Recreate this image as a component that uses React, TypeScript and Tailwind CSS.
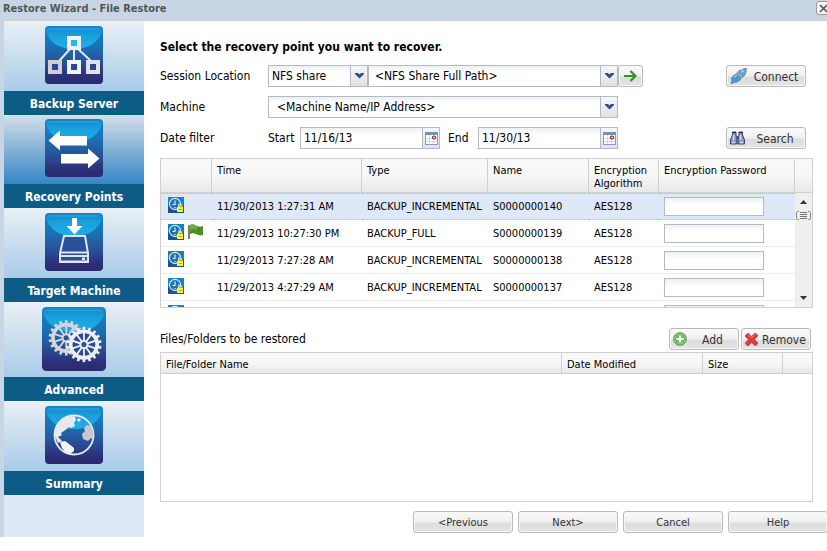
import { useId, type ReactNode } from "react";

const points = [
  { time: "11/30/2013 1:27:31 AM", type: "BACKUP_INCREMENTAL", name: "S0000000140", full: false },
  { time: "11/29/2013 10:27:30 PM", type: "BACKUP_FULL", name: "S0000000139", full: true },
  { time: "11/29/2013 7:27:28 AM", type: "BACKUP_INCREMENTAL", name: "S0000000138", full: false },
  { time: "11/29/2013 4:27:29 AM", type: "BACKUP_INCREMENTAL", name: "S0000000137", full: false },
  { time: "", type: "", name: "", full: false },
];

function Tile({ size = 58, children }: { size?: number; children: ReactNode }) {
  const id = useId();
  return (
    <svg width={size} height={size} viewBox="0 0 58 58" aria-hidden="true">
      <defs>
        <linearGradient id={id + "b"} x1="0" y1="0" x2="0" y2="1">
          <stop offset="0" stopColor="#1683c6" />
          <stop offset="0.35" stopColor="#1b70b5" />
          <stop offset="0.6" stopColor="#27549a" />
          <stop offset="0.88" stopColor="#2c2e78" />
          <stop offset="1" stopColor="#2a2a70" />
        </linearGradient>
        <linearGradient id={id + "g"} x1="0" y1="0" x2="0" y2="1">
          <stop offset="0" stopColor="#1585cb" />
          <stop offset="0.4" stopColor="#18a2dc" />
          <stop offset="1" stopColor="#22aeea" />
        </linearGradient>
        <clipPath id={id + "c"}>
          <rect width="58" height="58" rx="4" />
        </clipPath>
      </defs>
      <g clipPath={`url(#${id}c)`}>
        <rect width="58" height="58" fill={`url(#${id}b)`} />
        <path d="M1 5Q1 1 5 1H53Q57 1 57 5C54 16 44 23 29 23S4 16 1 5Z" fill={`url(#${id}g)`} />
        <path d="M4 3H54" stroke="#36bdea" strokeWidth="1" opacity=".7" />
      </g>
      {children}
    </svg>
  );
}

const ServerIcon = () => (
  <Tile>
    <path d="M26 22L14 35M29 22V35M32 22L46 35" stroke="#e4e6ec" strokeWidth="2" />
    <rect x="24" y="12" width="10" height="10" fill="#27b4ef" stroke="#f2f2f2" strokeWidth="4" />
    <rect x="5" y="36" width="10" height="10" fill="#294a91" stroke="#d0d0d2" strokeWidth="4" />
    <rect x="24" y="36" width="10" height="10" fill="#294a91" stroke="#f2f2f2" strokeWidth="4" />
    <rect x="43" y="36" width="10" height="10" fill="#294a91" stroke="#e2e2e4" strokeWidth="4" />
  </Tile>
);

const ArrowsIcon = () => (
  <Tile>
    <path d="M3.500 21.500L15 11.500V17H42V26.500H15V31.500Z" fill="#fff" />
    <path d="M54.500 39.500L43 29.500V35H16V44.500H43V49.500Z" fill="#fff" />
  </Tile>
);

const DriveIcon = () => (
  <Tile>
    <path d="M27 5H32V13H37.500L29.500 21.500L21.500 13H27Z" fill="#fff" />
    <path d="M19 23H40L43 40V49H15V40Z" fill="#29519a" stroke="#e4e4e8" strokeWidth="2" />
    <path d="M15.500 39.500H42.500M15 43H43" stroke="#e4e4e8" strokeWidth="2" />
    <path d="M15 48.500H43" stroke="#e4e4e8" strokeWidth="2" />
    <rect x="37" y="44.500" width="3" height="2.500" fill="#e4e4e8" />
  </Tile>
);

function Gear({ cx, cy, color }: { cx: number; cy: number; color: string }) {
  return (
    <g transform={`translate(${cx} ${cy})`}>
      {Array.from({ length: 18 }, (_, i) => (
        <rect key={i} x="-1.200" y="-16" width="2.400" height="4" fill={color} transform={`rotate(${i * 20})`} />
      ))}
      <circle r="12" fill="none" stroke={color} strokeWidth="3.400" />
      {Array.from({ length: 10 }, (_, i) => (
        <path key={i} d="M0 -3V-11" stroke={color} strokeWidth="1.700" transform={`rotate(${i * 36})`} />
      ))}
      <circle r="3.300" fill="#2a5299" stroke={color} strokeWidth="1.800" />
    </g>
  );
}

const GearsIcon = () => (
  <Tile size={64}>
    <Gear cx={22} cy={28} color="#d6d6da" />
    <circle cx="38" cy="34" r="14" fill="#284b93" />
    <Gear cx={38} cy={34} color="#eeeeee" />
  </Tile>
);

const GlobeIcon = () => (
  <Tile>
    <circle cx="29" cy="29" r="19.500" fill="none" stroke="#e8eaee" strokeWidth="1.800" />
    <path d="M9.500 29C10 20 16 12 24 10L30 10.500L31 14L29 17L30 20L26 22L24 21L19 25L16 27L17 29L13 31L17 35L13 37Z" fill="#e9e9eb" />
    <path d="M33 12L36 13.500L34.500 16L32 14.500Z" fill="#e9e9eb" />
    <path d="M15 36L20 35L24 38L29 42L29 45L25 48L20 46L17 42Z" fill="#f4f4f4" />
    <path d="M37 28L40 25L39 22L42 19L46 20L48.500 27L48 34L46 32L43 35L38 33Z" fill="#c8c8cc" />
  </Tile>
);

function ClockLockIcon() {
  return (
    <svg width="16" height="16" viewBox="0 0 16 16" role="img" aria-label="Encrypted session" className="shrink-0">
      <rect width="16" height="9" fill="#1583c4" />
      <rect y="8" width="16" height="8" fill="#1f4f96" />
      <circle cx="7" cy="7" r="5.600" fill="#1d74b8" stroke="#d6ebf7" strokeWidth="1.100" />
      <path d="M7 3.500V7.500H4.500M7 11V10M10 7H11.500" stroke="#eaf6fc" strokeWidth="1.100" fill="none" />
      <path d="M10.500 10V9a1.800 1.800 0 0 1 3.500 0v1" stroke="#f4ee4a" strokeWidth="1.200" fill="none" />
      <rect x="9" y="10" width="6" height="5" fill="#f8f23a" />
      <path d="M11 12.500H14" stroke="#b9a913" />
    </svg>
  );
}

function FlagIcon() {
  return (
    <svg width="15" height="15" viewBox="0 0 15 15" role="img" aria-label="Full backup" className="shrink-0">
      <path d="M2 1C5 0 7 1 9 2S12 3 15 2V11C12 12 11 11 8 10S5 9 2 10Z" fill="#4f8d22" />
      <path d="M2 1C5 0 7 1 9 2V6C6 5 5 5 2 6Z" fill="#74a94a" />
      <path d="M1 1V15" stroke="#3d4a34" strokeWidth="1.400" />
    </svg>
  );
}

const Chevron = () => (
  <svg width="9" height="6" viewBox="0 0 9 6" aria-hidden="true">
    <path d="M0 0H3L4.500 1.500L6 0H9V1L4.500 5.500L0 1Z" fill="#2f4d84" />
  </svg>
);

const CalendarIcon = () => (
  <svg width="13" height="13" viewBox="0 0 13 13" aria-hidden="true">
    <rect x=".5" y=".5" width="12" height="12" fill="#fff" stroke="#7f9cc4" />
    <rect x="0" y="0" width="13" height="3" fill="#6f93c4" />
    <path d="M1 6.500H12M1 9.500H12M4.500 3V12M8.500 3V12" stroke="#d3d8e0" />
    <circle cx="9" cy="5.500" r="1.500" fill="#fff" stroke="#9c1c1c" strokeWidth="1.200" />
  </svg>
);

const PlugIcon = () => (
  <svg width="17" height="17" viewBox="0 0 17 17" aria-hidden="true">
    <path d="M1 16L2 13L1.500 10L4 7L8 5L12 9L10 12L7 14L4 14.500Z" fill="#5b92d2" stroke="#4679b8" strokeWidth=".7" />
    <path d="M7 5L9 2.500L12 2L14 .5L16.500 .5L16 4L15 7L12.500 9.500Z" fill="#6b9fdc" stroke="#4679b8" strokeWidth=".7" />
    <path d="M7.500 5L12 9.500" stroke="#7fd07a" strokeWidth="1.400" />
    <path d="M4 9L7 7M11 4L14 2.500" stroke="#a9cbf0" strokeWidth="1.400" />
  </svg>
);

const BinocularsIcon = () => (
  <svg width="15" height="14" viewBox="0 0 15 14" aria-hidden="true">
    <path d="M2.500 1H6V4L7 7V13H.5V9L2.500 4ZM9 1H12.500V4L14.500 9V13H8V7L9 4Z" fill="#8897c4" stroke="#2b355c" strokeWidth=".9" />
    <path d="M6 5H9V8H6Z" fill="#4a5888" />
    <path d="M3.500 4V9M10.500 4V9M2 11.500H5M10 11.500H13" stroke="#dbe3f6" strokeWidth="1.400" />
    <path d="M2 1.500H6M9 1.500H13" stroke="#1f2540" strokeWidth="1.200" />
  </svg>
);

const AddIcon = () => (
  <svg width="14" height="14" viewBox="0 0 14 14" aria-hidden="true">
    <circle cx="7" cy="7" r="6.300" fill="#6cb65c" stroke="#48914a" strokeWidth="1" />
    <circle cx="7" cy="7" r="5.200" fill="none" stroke="#a6d79a" strokeWidth=".7" />
    <path d="M7 3.500V10.500M3.500 7H10.500" stroke="#fff" strokeWidth="2.200" />
  </svg>
);

const RemoveIcon = () => (
  <svg width="13" height="13" viewBox="0 0 13 13" aria-hidden="true">
    <path d="M3 0L6.500 3.500L10 0L13 2.500L9.500 6.500L13 10L10.500 13L6.500 9.500L3 13L0 10.500L3.500 6.500L0 3Z" fill="#df3a3c" stroke="#b52a2c" strokeWidth=".7" />
    <path d="M3 1.500L6.500 5L10 1.500" stroke="#f08a80" fill="none" />
  </svg>
);

const buttonSkin =
  "h-[22px] rounded-[3px] border border-[#bbbbbb] bg-[linear-gradient(#fafafa,#efefef_50%,#dcdcdc_55%,#e4e4e4)] shadow-[inset_0_0_0_1px_#f7f7f7] text-[#333333]";

function IconButton({ icon, label, width }: { icon: ReactNode; label: string; width: string }) {
  return (
    <button type="button" className={`flex items-center pl-[3px] ${width} ${buttonSkin}`}>
      {icon}
      <span className="flex-1 pt-px text-center">{label}</span>
    </button>
  );
}

const fieldSkin = "h-[22px] border border-[#b5b8c8] bg-[linear-gradient(#edf1f1,#ffffff_7px)]";

function Trigger({ children, label }: { children: ReactNode; label: string }) {
  return (
    <button
      type="button"
      aria-label={label}
      className="flex w-[17px] shrink-0 items-center justify-center border-l border-[#b5b8c8] bg-[linear-gradient(#f6f6f6,#e2e2e6)]"
    >
      {children}
    </button>
  );
}

function TriggerField(props: { id?: string; label?: string; value: string; pad: string; trigger: ReactNode; triggerLabel: string }) {
  return (
    <div className={`flex min-w-0 flex-1 ${fieldSkin}`}>
      <input
        id={props.id}
        aria-label={props.label}
        defaultValue={props.value}
        className={`min-w-0 flex-1 bg-transparent outline-none ${props.pad}`}
      />
      <Trigger label={props.triggerLabel}>{props.trigger}</Trigger>
    </div>
  );
}

const steps = [
  { label: "Backup Server", icon: <ServerIcon />, box: "h-[70px] pt-[5px] bg-[linear-gradient(#eaf0f5,#a9cbe9)]" },
  { label: "Recovery Points", icon: <ArrowsIcon />, box: "h-[69px] pt-1 bg-[linear-gradient(#d5dfe9,#3585c6)]" },
  { label: "Target Machine", icon: <DriveIcon />, box: "h-[70px] pt-[5px] bg-[linear-gradient(#eaf0f5,#a9cbe9)]" },
  { label: "Advanced", icon: <GearsIcon />, box: "h-[75px] pt-[5px] bg-[linear-gradient(#eaf0f5,#a9cbe9)]" },
  { label: "Summary", icon: <GlobeIcon />, box: "h-[70px] pt-[5px] bg-[linear-gradient(#eaf0f5,#a9cbe9)]" },
];

const headSkin = "border-b border-[#d0d0d0] bg-[linear-gradient(#f9f9f9,#f7f7f7_50%,#e8e9eb)]";
const headCell = "border-r border-[#d0d0d0] px-[5px] text-left align-top font-normal last:border-r-0";

export default function App() {
  return (
    <div className="min-h-screen bg-white font-['DejaVu_Sans_Condensed','Noto_Sans',sans-serif] text-[12px] leading-4 text-black">
      <header className="flex h-[21px] items-start justify-between overflow-hidden border-b border-[#d0d0d0] bg-[#c7d5e5] pl-[3px]">
        <h1 className="pt-px text-[11px] font-bold text-[#555555]">Restore Wizard - File Restore</h1>
        <button
          type="button"
          aria-label="Close"
          className="-mr-1 mt-px flex h-[14px] w-[15px] items-center justify-center rounded-[3px] border border-[#999999] bg-[#f6f6f6]"
        >
          <svg width="9" height="9" viewBox="0 0 9 9" aria-hidden="true">
            <path d="M1 1L8 8M8 1L1 8" stroke="#555" strokeWidth="1.600" />
          </svg>
        </button>
      </header>

      <div className="flex">
        <nav className="mb-[14px] flex w-36 shrink-0 flex-col self-stretch border-l-4 border-[#c7d5e5] bg-[#dfe8f6]">
          {steps.map((s) => (
            <a key={s.label} href={"#" + s.label.replace(" ", "-")} className="block">
              <span className={`flex justify-center ${s.box}`}>{s.icon}</span>
              <span className="block h-6 bg-[#0d5c86] pt-px text-center text-[12px] font-bold leading-6 text-white">{s.label}</span>
            </a>
          ))}
        </nav>

        <main className="min-w-0 flex-1 pb-[18px] pl-4 pt-[17px]">
          <h2 className="text-[12px] font-bold leading-[18px]">Select the recovery point you want to recover.</h2>

          <form className="mr-[21px] mt-[9px] grid grid-cols-[108px_minmax(0,1fr)_108px_80px] items-center gap-y-[9px]">
            <label htmlFor="location">Session Location</label>
            <div className="flex">
              <div className="relative w-[100px] shrink-0">
                <select id="location" className={`w-full appearance-none pl-[3px] outline-none ${fieldSkin}`}>
                  <option>NFS share</option>
                </select>
                <span className="pointer-events-none absolute inset-y-px right-px flex w-[17px] items-center justify-center border-l border-[#b5b8c8] bg-[linear-gradient(#f6f6f6,#e2e2e6)]">
                  <Chevron />
                </span>
              </div>
              <TriggerField label="Share path" value="<NFS Share Full Path>" pad="pl-[6px]" trigger={<Chevron />} triggerLabel="Show paths" />
            </div>
            <button type="button" aria-label="Go" className={`flex w-[25px] items-center justify-center ${buttonSkin}`}>
              <svg width="13" height="12" viewBox="0 0 13 12" aria-hidden="true">
                <path d="M0 6H11M6.500 1L11.500 6L6.500 11" stroke="#2f9320" strokeWidth="2.200" fill="none" />
              </svg>
            </button>
            <IconButton icon={<PlugIcon />} label="Connect" width="w-full" />

            <label htmlFor="machine">Machine</label>
            <div className="flex">
              <TriggerField id="machine" value="<Machine Name/IP Address>" pad="pl-[8px]" trigger={<Chevron />} triggerLabel="Show machines" />
            </div>
            <span />
            <span />

            <span>Date filter</span>
            <div className="flex items-center">
              <label htmlFor="start" className="w-8">Start</label>
              <TriggerField id="start" value="11/16/13" pad="pl-[3px]" trigger={<CalendarIcon />} triggerLabel="Pick start date" />
              <label htmlFor="end" className="w-[38px] pl-2">End</label>
              <TriggerField id="end" value="11/30/13" pad="pl-[3px]" trigger={<CalendarIcon />} triggerLabel="Pick end date" />
            </div>
            <span />
            <IconButton icon={<BinocularsIcon />} label="Search" width="w-full" />
          </form>

          <div className="relative mr-[14px] mt-[9px] h-[150px] overflow-hidden border border-[#d0d0d0] text-[11px] leading-[13px]">
            <table className="w-full table-fixed border-separate border-spacing-0">
              <colgroup>
                <col className="w-[51px]" />
                <col className="w-[150px]" />
                <col />
                <col className="w-[101px]" />
                <col className="w-[70px]" />
                <col className="w-[136px]" />
                <col className="w-[17px]" />
              </colgroup>
              <thead>
                <tr className="h-[34px]">
                  {["", "Time", "Type", "Name", "Encryption Algorithm", "Encryption Password", ""].map((h, i) => (
                    <th key={i} className={`${headCell} ${headSkin} pt-[5px]`}>{h}</th>
                  ))}
                </tr>
              </thead>
              <tbody>
                {points.map((p, i) => {
                  const cell =
                    i === 0
                      ? "h-[27px] border-y border-dotted border-[#a3bae9] bg-[#dfe8f6] pl-[5px]"
                      : "h-[27px] border-b border-[#ededed] pl-[5px]";
                  return (
                    <tr key={i}>
                      <td className={`${cell} pb-[3px]`}>
                        <span className="flex items-center gap-1 pl-[2px]">
                          <ClockLockIcon />
                          {p.full && <FlagIcon />}
                        </span>
                      </td>
                      <td className={cell}>{p.time}</td>
                      <td className={cell}>{p.type}</td>
                      <td className={cell}>{p.name}</td>
                      <td className={cell}>{p.name && "AES128"}</td>
                      <td className={cell}>
                        <input
                          type="password"
                          aria-label={"Encryption password for " + p.name}
                          className="block h-[19px] w-[100px] border border-[#b5b8c8] bg-[linear-gradient(#edf1f1,#ffffff_7px)]"
                        />
                      </td>
                      <td />
                    </tr>
                  );
                })}
              </tbody>
            </table>
            <div className="absolute bottom-0 right-0 top-[34px] flex w-[17px] flex-col items-center bg-[#efefef] py-[7px]">
              <svg width="7" height="4" viewBox="0 0 7 4" aria-hidden="true"><path d="M0 4L3.500 0L7 4Z" fill="#333" /></svg>
              <svg width="15" height="9" viewBox="0 0 15 9" className="mt-[7px]" aria-hidden="true">
                <path d="M3 .5H1.500Q.5 .5 .5 1.500V7.500Q.5 8.500 1.500 8.500H3M12 .5H13.500Q14.500 .5 14.500 1.500V7.500Q14.500 8.500 13.500 8.500H12" stroke="#888" fill="none" />
                <path d="M4 1.500H11M4 3.500H11M4 5.500H11M4 7.500H11" stroke="#777" />
              </svg>
              <svg width="7" height="4" viewBox="0 0 7 4" className="mt-auto" aria-hidden="true"><path d="M0 0L3.500 4L7 0Z" fill="#333" /></svg>
            </div>
          </div>

          <div className="mr-4 mt-5 flex items-center gap-[2px]">
            <h3 className="flex-1">Files/Folders to be restored</h3>
            <IconButton icon={<AddIcon />} label="Add" width="w-[70px]" />
            <IconButton icon={<RemoveIcon />} label="Remove" width="w-[70px]" />
          </div>

          <div className="mr-[14px] mt-[2px] h-[150px] border border-[#d0d0d0] text-[11px] leading-[13px]">
            <table className="w-full table-fixed border-separate border-spacing-0">
              <colgroup>
                <col />
                <col className="w-[141px]" />
                <col className="w-20" />
                <col className="w-[29px]" />
              </colgroup>
              <thead>
                <tr className="h-[21px]">
                  {["File/Folder Name", "Date Modified", "Size", ""].map((h, i) => (
                    <th key={i} className={`${headCell} ${headSkin} pt-[5px]`}>{h}</th>
                  ))}
                </tr>
              </thead>
            </table>
          </div>

          <footer className="-mr-px mt-[9px] flex justify-end gap-[5px]">
            {["<Previous", "Next>", "Cancel", "Help"].map((b) => (
              <button key={b} type="button" className={`w-[100px] pt-px text-[11px] ${buttonSkin}`}>{b}</button>
            ))}
          </footer>
        </main>
      </div>
    </div>
  );
}
